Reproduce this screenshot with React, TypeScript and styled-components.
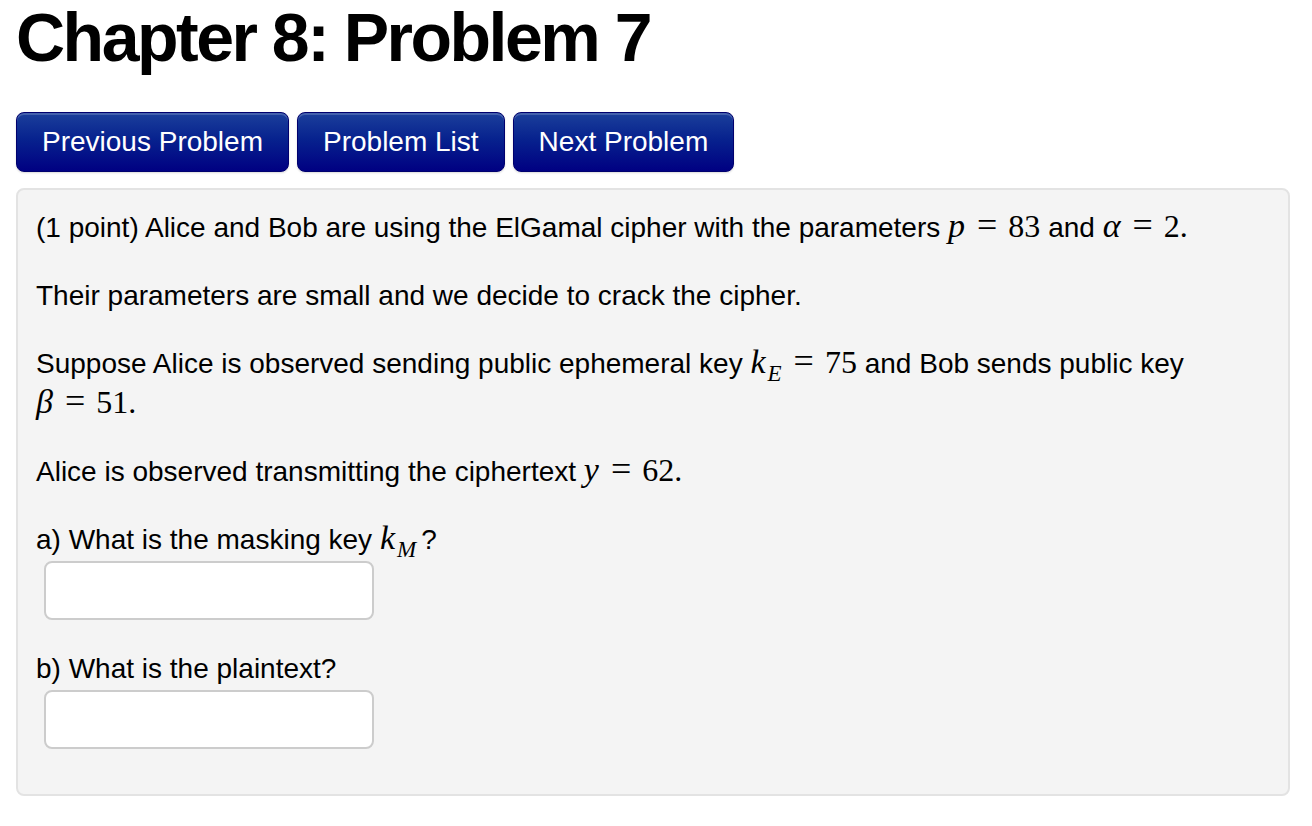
import React from "react";
import styled, { createGlobalStyle } from "styled-components";

const Global = createGlobalStyle`
  html, body { margin: 0; padding: 0; background: #ffffff; }
  body { font-family: "Liberation Sans", Arial, Helvetica, sans-serif; color: #000; }
  * { box-sizing: border-box; }
`;

const Page = styled.div`
  padding: 0 22px 0 16px;
  width: 1312px;
`;

const Title = styled.h1`
  margin: 0 0 38px 0;
  font-size: 68px;
  line-height: 74px;
  font-weight: 700;
  letter-spacing: -2.5px;
`;

const NavBar = styled.div`
  display: flex;
  gap: 8px;
  margin-bottom: 16px;
`;

const NavButton = styled.button`
  height: 60px;
  padding: 0 25px;
  font-family: "Liberation Sans", Arial, Helvetica, sans-serif;
  font-size: 28px;
  line-height: 58px;
  color: #ffffff;
  border: 1px solid #00006e;
  border-radius: 8px;
  background: linear-gradient(to bottom, #1b3f9b 0%, #07228e 45%, #000082 100%);
  box-shadow: inset 0 2px 0 rgba(255, 255, 255, 0.18), 0 1px 2px rgba(0, 0, 0, 0.15);
  cursor: pointer;
`;

const Panel = styled.div`
  background: #f4f4f4;
  border: 2px solid #e3e3e3;
  border-radius: 8px;
  padding: 18px 18px 20px 18px;
  height: 608px;
  font-size: 28px;
  line-height: 40px;
`;

const Para = styled.p`
  margin: 0 0 28px 0;
`;

const Label = styled.p`
  margin: 0 0 1px 0;
`;

const Math = styled.span`
  font-family: "Liberation Serif", "Times New Roman", serif;
  font-size: 32px;
  line-height: 0;
  white-space: nowrap;
`;

const V = styled.i`
  font-style: italic;
  font-size: 34px;
`;

const Op = styled.span`
  display: inline-block;
  font-size: 36px;
  margin: 0 11px 0 12px;
`;

const Sub = styled.sub`
  font-size: 23px;
  font-style: italic;
  vertical-align: -8px;
  line-height: 0;
  margin-left: 2px;
`;

const Punct = styled.span`
  margin-left: 5px;
`;

const AnswerInput = styled.input`
  display: block;
  margin: 0 0 29px 8px;
  width: 330px;
  height: 59px;
  border: 2px solid #cccccc;
  border-radius: 8px;
  background: #ffffff;
  font-size: 28px;
  padding: 0 10px;
  outline: none;
`;

export default function App() {
  return (
    <Page>
      <Global />
      <Title>Chapter 8: Problem 7</Title>
      <NavBar>
        <NavButton>Previous Problem</NavButton>
        <NavButton>Problem List</NavButton>
        <NavButton>Next Problem</NavButton>
      </NavBar>
      <Panel>
        <Para>
          (1 point) Alice and Bob are using the ElGamal cipher with the parameters{" "}
          <Math>
            <V>p</V>
            <Op>=</Op>83
          </Math>{" "}
          and{" "}
          <Math>
            <V>α</V>
            <Op>=</Op>2.
          </Math>
        </Para>
        <Para>Their parameters are small and we decide to crack the cipher.</Para>
        <Para>
          Suppose Alice is observed sending public ephemeral key{" "}
          <Math>
            <V>k</V>
            <Sub>E</Sub>
            <Op>=</Op>75
          </Math>{" "}
          and Bob sends public key{" "}
          <Math>
            <V>β</V>
            <Op>=</Op>51.
          </Math>
        </Para>
        <Para>
          Alice is observed transmitting the ciphertext{" "}
          <Math>
            <V>y</V>
            <Op>=</Op>62.
          </Math>
        </Para>
        <Label>
          a) What is the masking key{" "}
          <Math>
            <V>k</V>
            <Sub>M</Sub>
          </Math>
          <Punct>?</Punct>
        </Label>
        <AnswerInput type="text" aria-label="masking key" />
        <Label>b) What is the plaintext?</Label>
        <AnswerInput type="text" aria-label="plaintext" />
      </Panel>
    </Page>
  );
}
